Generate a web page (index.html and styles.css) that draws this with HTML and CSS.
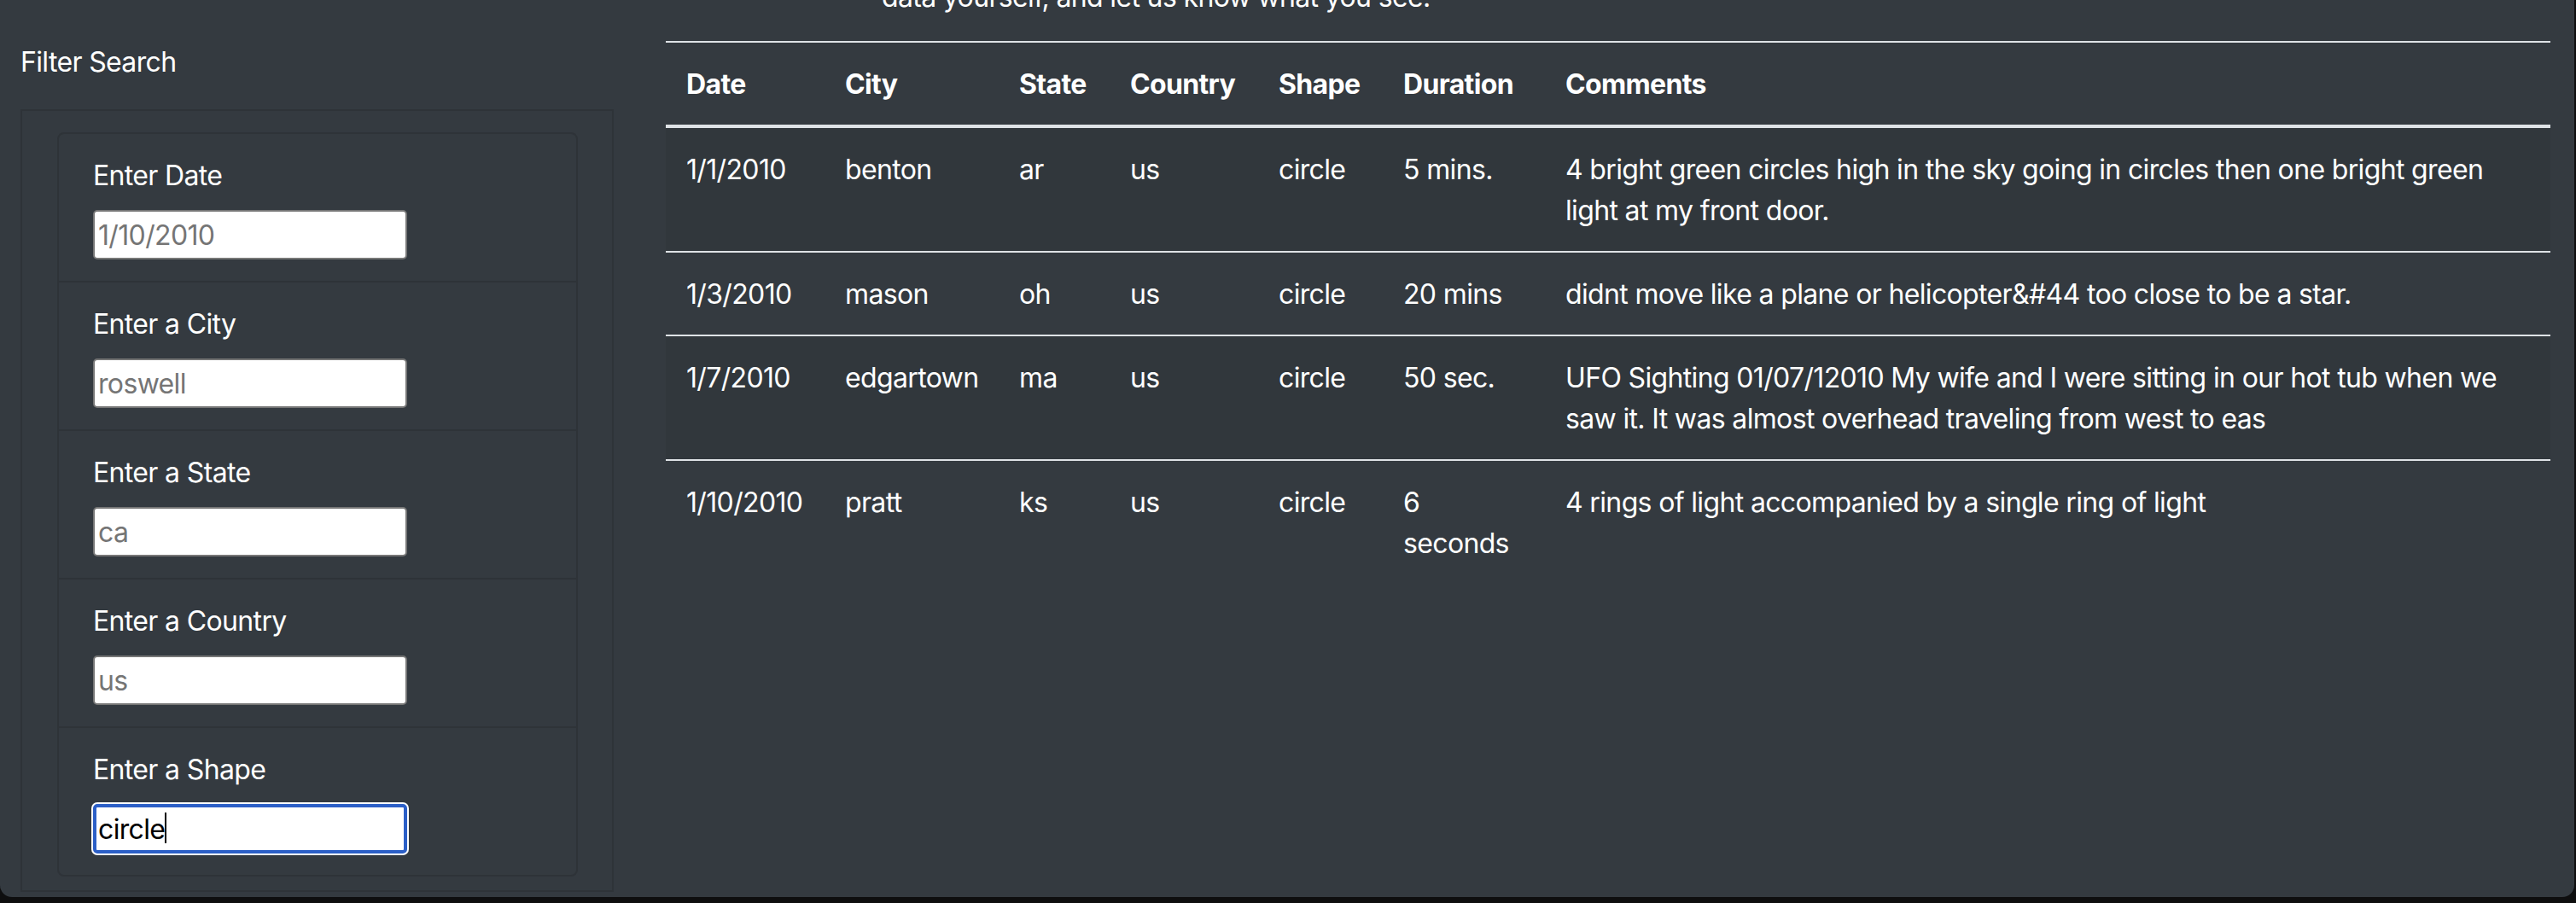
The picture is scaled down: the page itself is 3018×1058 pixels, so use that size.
FILE: index.html
```html
<!DOCTYPE html>
<html lang="en">
<head>
<meta charset="utf-8">
<title>UFO Sightings</title>
<link rel="stylesheet" href="styles.css">
</head>
<body>
<div class="window">
  <aside class="sidebar">
    <h5 class="filter-title">Filter Search</h5>
    <div class="filter-box">
      <ul class="filter-list">
        <li class="filter-item">
          <label class="filter-label" for="datetime">Enter Date</label>
          <input class="filter-input" id="datetime" type="text" placeholder="1/10/2010">
        </li>
        <li class="filter-item">
          <label class="filter-label" for="city">Enter a City</label>
          <input class="filter-input" id="city" type="text" placeholder="roswell">
        </li>
        <li class="filter-item">
          <label class="filter-label" for="state">Enter a State</label>
          <input class="filter-input" id="state" type="text" placeholder="ca">
        </li>
        <li class="filter-item">
          <label class="filter-label" for="country">Enter a Country</label>
          <input class="filter-input" id="country" type="text" placeholder="us">
        </li>
        <li class="filter-item">
          <label class="filter-label" for="shape">Enter a Shape</label>
          <span class="input-wrap">
            <input class="filter-input is-focused" id="shape" type="text" placeholder="circle" value="circle">
            <span class="caret"></span>
          </span>
        </li>
      </ul>
    </div>
  </aside>
  <main class="content">
    <p class="intro">data yourself, and let us know what you see.</p>
    <table class="ufo-table">
      <colgroup>
        <col class="c-date"><col class="c-city"><col class="c-state"><col class="c-country"><col class="c-shape"><col class="c-duration"><col class="c-comments">
      </colgroup>
      <thead>
        <tr>
          <th>Date</th><th>City</th><th>State</th><th>Country</th><th>Shape</th><th>Duration</th><th>Comments</th>
        </tr>
      </thead>
      <tbody>
        <tr>
          <td>1/1/2010</td><td>benton</td><td>ar</td><td>us</td><td>circle</td><td>5 mins.</td>
          <td>4 bright green circles high in the sky going in circles then one bright green light at my front door.</td>
        </tr>
        <tr>
          <td>1/3/2010</td><td>mason</td><td>oh</td><td>us</td><td>circle</td><td>20 mins</td>
          <td>didnt move like a plane or helicopter&amp;#44 too close to be a star.</td>
        </tr>
        <tr>
          <td>1/7/2010</td><td>edgartown</td><td>ma</td><td>us</td><td>circle</td><td>50 sec.</td>
          <td>UFO Sighting 01/07/12010 My wife and I were sitting in our hot tub when we saw it. It was almost overhead traveling from west to eas</td>
        </tr>
        <tr>
          <td>1/10/2010</td><td>pratt</td><td>ks</td><td>us</td><td>circle</td><td>6 seconds</td>
          <td>4 rings of light accompanied by a single ring of light</td>
        </tr>
      </tbody>
    </table>
  </main>
</div>
</body>
</html>
```

FILE: styles.css
```css
* { box-sizing: border-box; }

html, body {
  margin: 0;
  padding: 0;
}

body {
  background: #0e0e0f;
  width: 3018px;
  height: 1058px;
  overflow: hidden;
  font-family: Inter, "Liberation Sans", sans-serif;
  font-size: 32px;
  line-height: 48px;
  letter-spacing: -0.65px;
  color: #fff;
}

.window {
  width: 3016px;
  height: 1051px;
  background: #343a40;
  border-radius: 0 0 14px 14px;
  overflow: hidden;
  display: flex;
  align-items: flex-start;
}

/* ---------- Sidebar ---------- */
.sidebar {
  width: 719px;
  flex: none;
  padding: 49px 0 0 24px;
}

.filter-title {
  margin: 0 0 31px;
  font-size: 32px;
  line-height: 48px;
  font-weight: 400;
}

.filter-box {
  border: 2px solid #2e3338;
  padding: 25px 40px 16px 41px;
}

.filter-list {
  list-style: none;
  margin: 0;
  padding: 0;
  border: 2px solid #2e3338;
  border-radius: 8px;
}

.filter-item {
  display: flex;
  flex-direction: column;
  align-items: flex-start;
  padding: 25px 40px 25px;
  border-top: 2px solid #2e3338;
}

.filter-item:first-child { border-top: 0; }

.filter-label {
  display: block;
  margin-bottom: 16px;
  font-size: 32px;
  line-height: 48px;
}

.filter-input {
  display: block;
  width: 368px;
  height: 58px;
  margin: 0;
  padding: 1px 4px 0;
  border: 2px solid #767676;
  border-radius: 5px;
  background: #fff;
  color: #000;
  font-family: inherit;
  font-size: 32px;
  line-height: 48px;
  letter-spacing: -0.65px;
  outline: none;
}

.filter-input::placeholder { color: #757575; opacity: 1; }

.input-wrap {
  position: relative;
  display: block;
}

.filter-input.is-focused {
  border: 4px solid #2c5fc7;
  padding: 1px 2px 0;
  box-shadow: 0 0 0 2px #fff;
}

.caret {
  position: absolute;
  left: 84px;
  top: 10px;
  width: 2px;
  height: 36px;
  background: #000;
}

/* ---------- Content ---------- */
.content {
  flex: none;
  width: 2208px;
  margin-left: 61px;
}

.intro {
  margin: -27px 0 27px;
  padding-left: 253px;
  font-size: 32px;
  line-height: 48px;
  font-weight: 400;
}

.ufo-table {
  width: 2208px;
  table-layout: fixed;
  border-collapse: collapse;
  color: #fff;
}

.c-date { width: 186px; }
.c-city { width: 204px; }
.c-state { width: 130px; }
.c-country { width: 174px; }
.c-shape { width: 146px; }
.c-duration { width: 190px; }
.c-comments { width: 1178px; }

.ufo-table th,
.ufo-table td {
  padding: 25px 24px 23px;
  text-align: left;
  vertical-align: top;
  border-top: 2px solid #dee2e6;
  font-size: 32px;
  line-height: 48px;
}

.ufo-table th {
  font-weight: 700;
  border-bottom: 4px solid #dee2e6;
}

.ufo-table tbody tr:nth-of-type(odd) {
  background: rgba(0, 0, 0, 0.05);
}
```
